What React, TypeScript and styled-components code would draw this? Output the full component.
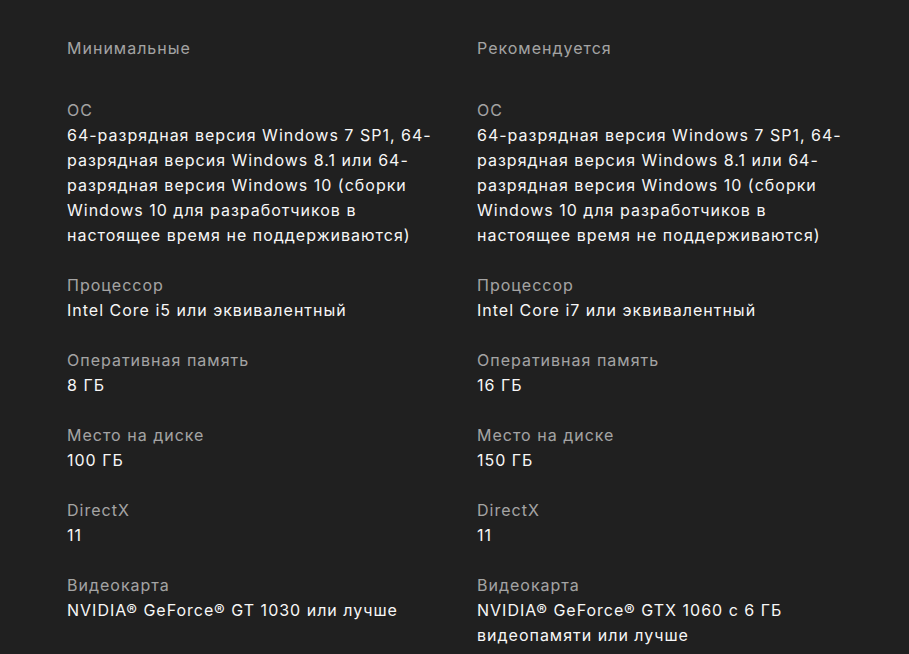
import React from 'react'
import styled, { createGlobalStyle } from 'styled-components'

const GlobalStyle = createGlobalStyle`
  html, body {
    margin: 0;
    padding: 0;
    background-color: #202020;
  }
  body {
    font-family: Inter, "Noto Sans", "Liberation Sans", sans-serif;
    -webkit-font-smoothing: antialiased;
  }
`

const Page = styled.div`
  min-height: 654px;
  background-color: #202020;
  padding: 36px 0 0 67px;
  box-sizing: border-box;
`

const Columns = styled.div`
  display: grid;
  grid-template-columns: 375px 375px;
  column-gap: 35px;
`

const Column = styled.section`
  display: flex;
  flex-direction: column;
`

const Heading = styled.h3`
  margin: 0 0 37px;
  font-size: 16px;
  font-weight: 400;
  line-height: 25px;
  letter-spacing: 1px;
  color: rgba(255, 255, 255, 0.6);
`

const Spec = styled.div`
  margin-bottom: 25px;
`

const Label = styled.div`
  font-size: 16px;
  line-height: 25px;
  letter-spacing: 1px;
  color: rgba(255, 255, 255, 0.6);
`

const Value = styled.div`
  font-size: 16px;
  line-height: 25px;
  letter-spacing: 1px;
  color: #f7f7f7;
`

interface SpecItem {
  label: string
  value: string
}

const osText =
  '64-разрядная версия Windows 7 SP1, 64-разрядная версия Windows 8.1 или 64-разрядная версия Windows 10 (сборки Windows 10 для разработчиков в настоящее время не поддерживаются)'

const minimum: SpecItem[] = [
  { label: 'ОС', value: osText },
  { label: 'Процессор', value: 'Intel Core i5 или эквивалентный' },
  { label: 'Оперативная память', value: '8 ГБ' },
  { label: 'Место на диске', value: '100 ГБ' },
  { label: 'DirectX', value: '11' },
  { label: 'Видеокарта', value: 'NVIDIA® GeForce® GT 1030 или лучше' },
]

const recommended: SpecItem[] = [
  { label: 'ОС', value: osText },
  { label: 'Процессор', value: 'Intel Core i7 или эквивалентный' },
  { label: 'Оперативная память', value: '16 ГБ' },
  { label: 'Место на диске', value: '150 ГБ' },
  { label: 'DirectX', value: '11' },
  { label: 'Видеокарта', value: 'NVIDIA® GeForce® GTX 1060 с 6 ГБ видеопамяти или лучше' },
]

const SpecColumn = ({ title, items }: { title: string; items: SpecItem[] }) => (
  <Column>
    <Heading>{title}</Heading>
    {items.map((item) => (
      <Spec key={item.label}>
        <Label>{item.label}</Label>
        <Value>{item.value}</Value>
      </Spec>
    ))}
  </Column>
)

const App = () => {
  return (
    <>
      <GlobalStyle />
      <Page>
        <Columns>
          <SpecColumn title="Минимальные" items={minimum} />
          <SpecColumn title="Рекомендуется" items={recommended} />
        </Columns>
      </Page>
    </>
  )
}

export default App
